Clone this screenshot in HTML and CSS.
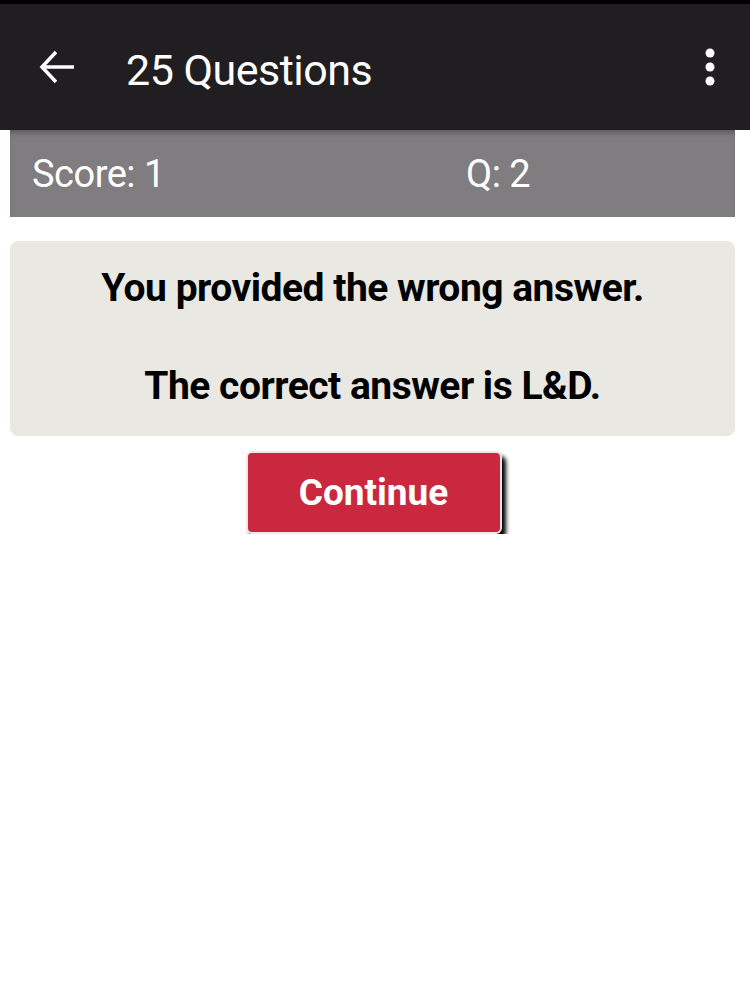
FILE: index.html
```html
<!DOCTYPE html>
<html lang="en">
<head>
	<meta charset="UTF-8">
	<title>25 Questions</title>
	<link rel="stylesheet" href="styles.css">
</head>
<body>
	<div class="status"></div>
	<header class="appbar">
		<svg class="back" width="40" height="40" viewBox="0 0 40 40">
			<path d="M36 20H6M18 5L4 20l14 15" fill="none" stroke="#fff" stroke-width="3.5"/>
		</svg>
		<h1 class="title">25 Questions</h1>
		<svg class="more" width="12" height="40" viewBox="0 0 12 40">
			<circle cx="6" cy="6" r="4.5" fill="#fff"/>
			<circle cx="6" cy="20" r="4.5" fill="#fff"/>
			<circle cx="6" cy="34" r="4.5" fill="#fff"/>
		</svg>
	</header>
	<main class="page">
		<div class="scorebar">
			<span class="score">Score: 1</span>
			<span class="qnum">Q: 2</span>
		</div>
		<div class="result">
			<p>You provided the wrong answer.</p>
			<p>The correct answer is L&amp;D.</p>
		</div>
		<button class="continue">Continue</button>
	</main>
</body>
</html>
```

FILE: styles.css
```css
html,body{
	margin: 0;
	padding: 0;
	background: #fff;
	font-family: Roboto, "Liberation Sans", sans-serif;
}
.status{
	height: 4px;
	background: #000;
}
.appbar{
	display: flex;
	align-items: center;
	height: 126px;
	padding: 0 34px 0 38px;
	background: #201e21;
	color: #fff;
}
.back{
	flex: none;
}
.title{
	flex: 1;
	margin: 6px 0 0 48px;
	font-size: 43px;
	font-weight: 400;
	letter-spacing: -0.5px;
}
.more{
	flex: none;
}
.page{
	display: flex;
	flex-direction: column;
	align-items: center;
	padding: 0 15px 0 10px;
}
.scorebar{
	display: flex;
	align-self: stretch;
	align-items: center;
	height: 87px;
	padding-left: 22px;
	background: #7f7d80;
	color: #fff;
	font-size: 38px;
	letter-spacing: -0.5px;
	box-shadow: inset 0 6px 6px -4px rgba(0,0,0,.35);
}
.score{
	width: 434px;
}
.result{
	align-self: stretch;
	margin-top: 24px;
	padding: 23px 0 26px;
	border-radius: 8px;
	background: #e9e8e3;
	text-align: center;
	font-size: 39px;
	font-weight: 700;
	letter-spacing: -0.5px;
	color: #000;
}
.result p{
	margin: 0;
	line-height: 48px;
}
.result p + p{
	margin-top: 50px;
}
.continue{
	margin: 15px 0 0 2px;
	width: 256px;
	height: 83px;
	border: 2px solid #f3e6e6;
	border-radius: 6px;
	background: #c9283f;
	color: #fff;
	font-family: Roboto, "Liberation Sans", sans-serif;
	font-size: 37px;
	font-weight: 700;
	box-shadow: 4px 5px 4px #000;
}
```
